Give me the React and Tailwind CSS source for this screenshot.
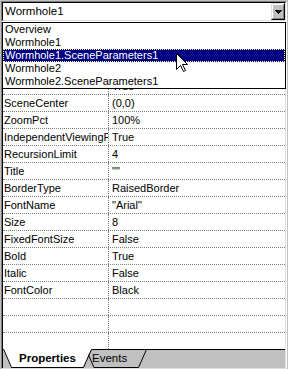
import React from 'react';

const hiddenRows = [
  { name: '(Name)', value: 'SceneParameters1' },
  { name: 'SceneWidth', value: '100' },
  { name: 'SceneHeight', value: '100' },
  { name: '', value: 'True' },
];

const rows = [
  { name: 'SceneCenter', value: '(0,0)' },
  { name: 'ZoomPct', value: '100%' },
  { name: 'IndependentViewingParameters', value: 'True' },
  { name: 'RecursionLimit', value: '4' },
  { name: 'Title', value: '""' },
  { name: 'BorderType', value: 'RaisedBorder' },
  { name: 'FontName', value: '"Arial"' },
  { name: 'Size', value: '8' },
  { name: 'FixedFontSize', value: 'False' },
  { name: 'Bold', value: 'True' },
  { name: 'Italic', value: 'False' },
  { name: 'FontColor', value: 'Black' },
  { name: '', value: '' },
  { name: '', value: '' },
];

const objects = [
  'Overview',
  'Wormhole1',
  'Wormhole1.SceneParameters1',
  'Wormhole2',
  'Wormhole2.SceneParameters1',
];

function PropRow({ name, value }) {
  return (
    <div className="flex h-[17px] border-b border-dotted border-[#808080]">
      <div className="w-[106px] shrink-0 overflow-hidden whitespace-nowrap border-r border-dotted border-[#808080] pl-[1px] leading-[16px]">
        {name}
      </div>
      <div className="flex-1 overflow-hidden whitespace-nowrap pl-[3px] leading-[16px]">{value}</div>
    </div>
  );
}

export default function App() {
  const selected = 'Wormhole1.SceneParameters1';

  return (
    <div className="relative w-[288px] h-[369px] overflow-hidden bg-[#c0c0c0] pt-[1px] font-['Liberation_Sans',Arial,sans-serif] text-[11px] text-black">
      {/* combo box */}
      <div className="mx-[1px] h-[21px] border border-t-[#808080] border-l-[#808080] border-r-white border-b-white">
        <div className="flex h-full border border-t-black border-l-black border-r-[#dfdfdf] border-b-[#dfdfdf] bg-white">
          <div className="flex-1 pl-[2px] leading-[17px] text-[11.5px]">Wormhole1</div>
          <div className="w-[14px] h-full border border-t-[#dfdfdf] border-l-[#dfdfdf] border-r-black border-b-black bg-[#c0c0c0]">
            <div className="flex h-full items-center justify-center border border-t-white border-l-white border-r-[#808080] border-b-[#808080]">
              <svg width="7" height="4" viewBox="0 0 7 4">
                <path d="M0 0h7v1h-1v1h-1v1h-1v1h-1v-1h-1v-1h-1v-1h-1z" fill="#000" />
              </svg>
            </div>
          </div>
        </div>
      </div>

      {/* property grid */}
      <div className="mx-[1px] h-[347px] border border-t-[#808080] border-l-[#808080] border-r-white border-b-[#dfdfdf]">
        <div className="flex h-full flex-col border-t border-l border-r border-t-black border-l-black border-r-[#dfdfdf] bg-white">
          <div className="pt-[3px]">
            {hiddenRows.map((r, i) => (
              <PropRow key={'h' + i} name={r.name} value={r.value} />
            ))}
            {rows.map((r, i) => (
              <PropRow key={i} name={r.name} value={r.value} />
            ))}
          </div>
          <div className="flex h-[16px]">
            <div className="w-[106px] border-r border-dotted border-[#808080]"></div>
          </div>

          {/* tabs */}
          <div className="relative h-[19px] bg-[#c0c0c0]">
            <svg className="absolute inset-0" width="282" height="19" viewBox="0 0 282 19">
              <path d="M83 0.5 L91 18.5 L135.5 18.5 L143.5 0.5" fill="#c0c0c0" stroke="#000" strokeWidth="1" />
              <path d="M0 0 L8 18 L80 18 L88 0 Z" fill="#fff" />
              <path d="M0.5 0 L8.5 18.5 L80.5 18.5 L88.5 0.5 L282 0.5" fill="none" stroke="#000" strokeWidth="1" />
            </svg>
            <div className="relative flex h-full items-center">
              <span className="ml-[16px] w-[72px] font-bold text-[11.5px]">Properties</span>
              <span className="ml-[1px] text-[11.5px]">Events</span>
            </div>
          </div>
        </div>
      </div>

      {/* open dropdown list */}
      <div className="absolute left-[2px] top-[22px] w-[284px] h-[67px] border border-black bg-white">
        {objects.map(o => (
          <div
            key={o}
            className={
              o === selected
                ? 'h-[13px] border border-dotted border-[#ffffa0] bg-[#000080] pl-[1px] leading-[11px] text-white'
                : 'h-[13px] pl-[2px] leading-[13px]'
            }
          >
            {o}
          </div>
        ))}
      </div>

      {/* mouse cursor */}
      <svg className="absolute left-[176px] top-[53px]" width="13" height="20" viewBox="0 0 13 20">
        <path d="M0.5 0.5 L0.5 16.5 L4.5 12.5 L7.5 18.5 L9.5 17.5 L6.5 11.5 L11.5 11.5 Z" fill="#fff" stroke="#000" strokeWidth="1" />
      </svg>
    </div>
  );
}
